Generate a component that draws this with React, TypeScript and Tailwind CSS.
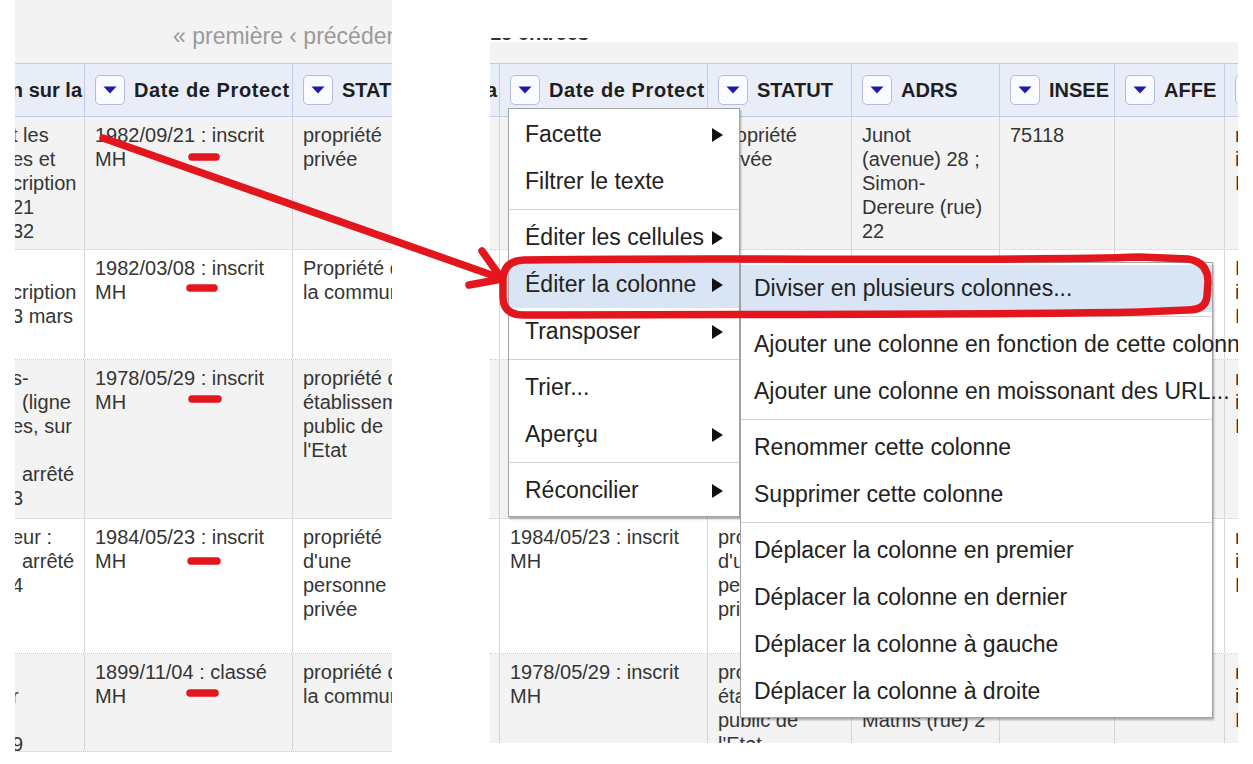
import React from "react";

type Line = React.ReactNode;

function Tri() {
  return (
    <svg width="14" height="8" viewBox="0 0 14 8">
      <path d="M0.5 0.5 H13.5 L7 7.5 Z" fill="#1c1ca6" />
    </svg>
  );
}

function DropBtn() {
  return (
    <div className="w-[30px] h-[30px] shrink-0 rounded-[5px] border border-[#b4bdd9] bg-[#fafbff] flex items-center justify-center">
      <Tri />
    </div>
  );
}

function SubArrow() {
  return (
    <svg width="11" height="14" viewBox="0 0 11 14" className="shrink-0">
      <path d="M0 0 L11 7 L0 14 Z" fill="#111" />
    </svg>
  );
}

function HeadCell({
  cls,
  label,
  btn = true,
  end = false,
  last = false,
  wide = false,
}: {
  cls: string;
  label: string;
  btn?: boolean;
  end?: boolean;
  last?: boolean;
  wide?: boolean;
}) {
  return (
    <div
      className={`${cls} shrink-0 h-full flex items-center overflow-hidden whitespace-nowrap text-[20px] font-bold text-[#1e1e1e] ${
        last ? "" : "border-r border-[#c6cde7]"
      } ${end ? "justify-end pr-[2px]" : "pl-[10px] gap-[9px]"}`}
    >
      {btn && <DropBtn />}
      <span className={wide ? "tracking-[0.6px]" : ""}>{label}</span>
    </div>
  );
}

function BodyCell({
  cls,
  lines,
  last = false,
  edge = false,
  tail = false,
}: {
  cls: string;
  lines: Line[];
  last?: boolean;
  edge?: boolean;
  tail?: boolean;
}) {
  const pad = edge ? "pl-0" : tail ? "pl-[10px] pr-0" : "px-[10px]";
  return (
    <div
      className={`${cls} shrink-0 h-full overflow-hidden pt-[6px] text-[20px] leading-[24px] text-[#353535] whitespace-nowrap ${
        last ? "" : "border-r border-[#d6d6d6]"
      } ${pad}`}
    >
      {lines.map((l, i) => (
        <div key={i} className={`h-[24px] ${edge ? "-ml-[3px]" : ""}`}>
          {l}
        </div>
      ))}
    </div>
  );
}

const ind = (t: string) => <span className="pl-[10px]">{t}</span>;

const rowHeights = ["h-[133px]", "h-[110px]", "h-[159px]", "h-[135px]", "h-[98px]"];
const rowBgs = ["bg-[#f3f3f3]", "bg-white", "bg-[#f3f3f3]", "bg-white", "bg-[#f3f3f3]"];

const leftRows: Line[][][] = [
  [["t les", "es et", "cription", "21", "32"], ["1982/09/21 : inscrit", "MH"], ["propriété", "privée"]],
  [["", "cription", "3 mars"], ["1982/03/08 : inscrit", "MH"], ["Propriété de", "la commune"]],
  [["s-", ind("(ligne"), "es, sur", "", ind("arrêté"), "3"], ["1978/05/29 : inscrit", "MH"], ["propriété d'un", "établissement", "public de", "l'Etat"]],
  [["eur :", ind("arrêté"), "4"], ["1984/05/23 : inscrit", "MH"], ["propriété", "d'une", "personne", "privée"]],
  [["", "r", "", "9"], ["1899/11/04 : classé", "MH"], ["propriété de", "la commune"]],
];

const rightRows: Line[][][] = [
  [[], ["1982/09/21 : inscrit", "MH"], ["propriété", "privée"], ["Junot", "(avenue) 28 ;", "Simon-", "Dereure (rue)", "22"], ["75118"], [], ["remis", "inscrit", "MH"]],
  [[], ["1982/03/08 : inscrit", "MH"], ["Propriété de", "la commune"], ["Lepic (rue) 12"], ["75118"], [], ["Façade", "inscrit", "MH"]],
  [[], ["1978/05/29 : inscrit", "MH"], ["propriété d'un", "établissement", "public de", "l'Etat"], ["Norvins (rue) 3"], ["75118"], [], ["remis", "inscrit", "MH"]],
  [[], ["1984/05/23 : inscrit", "MH"], ["propriété", "d'une", "personne", "privée"], ["Saules (rue des) 4"], ["75118"], [], ["remis", "inscrit", "MH"]],
  [[], ["1978/05/29 : inscrit", "MH"], ["propriété d'un", "établissement", "public de", "l'Etat"], ["Lepic (rue) 54 ;", "Girardon (rue) ;", "Mathis (rue) 2"], ["75118"], [], ["remis", "inscrit", "MH"]],
];

function LeftPanel() {
  const widths = ["w-[70px]", "w-[208px]", "w-[99px]"];
  return (
    <div className="ml-[15px] w-[377px] h-[752px] shrink-0 flex flex-col overflow-hidden">
      <div className="h-[63px] shrink-0 bg-[#f3f3f3] pl-[158px] pt-[23px] text-[23px] leading-[26px] text-[#9a9a9a] whitespace-nowrap overflow-hidden">
        « première ‹ précédente
      </div>
      <div className="h-[54px] shrink-0 flex bg-[#e9edf8] border-y border-[#c6cde7]">
        <HeadCell cls="w-[70px]" label="Protection sur la" btn={false} end />
        <HeadCell cls="w-[208px]" label="Date de Protect" wide />
        <HeadCell cls="w-[99px]" label="STATUT" last />
      </div>
      {leftRows.map((cells, r) => (
        <div key={r} className={`shrink-0 flex border-b border-dotted border-[#cdcdcd] ${rowHeights[r]} ${rowBgs[r]}`}>
          {cells.map((lines, c) => (
            <BodyCell key={c} cls={widths[c]} lines={lines} edge={c === 0} last={c === 2} />
          ))}
        </div>
      ))}
    </div>
  );
}

function MI({ label, arrow = false, hl = false, sub = false }: { label: string; arrow?: boolean; hl?: boolean; sub?: boolean }) {
  return (
    <div
      className={`h-[47px] flex items-center justify-between whitespace-nowrap text-[23px] text-[#222] ${
        sub ? "pl-[13px] pr-[10px]" : "pl-[16px] pr-[16px]"
      } ${hl ? "bg-[#d9e4f5]" : ""}`}
    >
      <span>{label}</span>
      {arrow && <SubArrow />}
    </div>
  );
}

function Sep() {
  return (
    <div className="h-[9px] flex items-center">
      <div className="h-px w-full bg-[#d2d2d2]" />
    </div>
  );
}

function Menu() {
  return (
    <div className="absolute left-[18px] top-[70px] w-[232px] bg-white border border-[#a3a3a3] shadow-[1px_2px_2px_rgba(0,0,0,0.3)] py-[2px]">
      <MI label="Facette" arrow />
      <MI label="Filtrer le texte" />
      <Sep />
      <MI label="Éditer les cellules" arrow />
      <MI label="Éditer la colonne" arrow hl />
      <MI label="Transposer" arrow />
      <Sep />
      <MI label="Trier..." />
      <MI label="Aperçu" arrow />
      <Sep />
      <MI label="Réconcilier" arrow />
    </div>
  );
}

function SubMenu() {
  return (
    <div className="absolute left-[250px] top-[224px] w-[473px] bg-white border border-[#a3a3a3] shadow-[1px_2px_2px_rgba(0,0,0,0.3)] py-[2px]">
      <MI sub hl label="Diviser en plusieurs colonnes..." />
      <Sep />
      <MI sub label="Ajouter une colonne en fonction de cette colonne..." />
      <MI sub label="Ajouter une colonne en moissonant des URL..." />
      <Sep />
      <MI sub label="Renommer cette colonne" />
      <MI sub label="Supprimer cette colonne" />
      <Sep />
      <MI sub label="Déplacer la colonne en premier" />
      <MI sub label="Déplacer la colonne en dernier" />
      <MI sub label="Déplacer la colonne à gauche" />
      <MI sub label="Déplacer la colonne à droite" />
    </div>
  );
}

function RightPanel() {
  const widths = ["w-[10px]", "w-[208px]", "w-[144px]", "w-[148px]", "w-[115px]", "w-[110px]", "w-[13px]"];
  return (
    <div className="relative ml-[98px] mt-[38px] w-[748px] h-[705px] shrink-0 overflow-hidden">
      <div className="h-[25px] flex flex-col overflow-hidden">
        <div className="h-[4px] shrink-0" />
        <div className="h-[21px] shrink-0 bg-[#f3f3f3]">
          <div className="-mt-[21px] text-[20px] leading-[24px] font-bold text-[#333] whitespace-nowrap">15 entrées</div>
        </div>
      </div>
      <div className="h-[54px] flex bg-[#e9edf8] border-y border-[#c6cde7]">
        <HeadCell cls="w-[10px]" label="sur la" btn={false} end />
        <HeadCell cls="w-[208px]" label="Date de Protect" wide />
        <HeadCell cls="w-[144px]" label="STATUT" />
        <HeadCell cls="w-[148px]" label="ADRS" />
        <HeadCell cls="w-[115px]" label="INSEE" />
        <HeadCell cls="w-[110px]" label="AFFE" />
        <HeadCell cls="w-[13px]" label="" last />
      </div>
      {rightRows.map((cells, r) => (
        <div key={r} className={`flex border-b border-dotted border-[#cdcdcd] ${rowHeights[r]} ${rowBgs[r]}`}>
          {cells.map((lines, c) => (
            <BodyCell key={c} cls={widths[c]} lines={lines} edge={c === 0} tail={c === 6} last={c === 6} />
          ))}
        </div>
      ))}
      <Menu />
      <SubMenu />
    </div>
  );
}

function Annotations() {
  const dashes: [number, number, number][] = [
    [192, 216, 157],
    [190, 214, 288],
    [192, 218, 399],
    [191, 217, 561],
    [190, 215, 693],
  ];
  return (
    <svg className="absolute inset-0 pointer-events-none" width="1253" height="764" viewBox="0 0 1253 764">
      <g stroke="#e3151d" strokeWidth="7.5" strokeLinecap="round" strokeLinejoin="round" fill="none">
        <path d="M103 138 L500 278" />
        <path d="M482 251 L502 279 L469 285" />
        <path d="M524 260 C 700 257, 1000 262, 1140 257 L 1188 259 Q 1208 262 1208 282 L 1207 296 Q 1206 310 1188 310 L 1140 312 C 1000 315, 700 314, 524 315 Q 503 315 503 297 L 503 280 Q 503 261 524 260 Z" />
        {dashes.map(([x1, x2, y], i) => (
          <path key={i} d={`M${x1} ${y} L${x2} ${y}`} />
        ))}
      </g>
    </svg>
  );
}

export default function App() {
  return (
    <div className="relative w-[1253px] h-[764px] bg-white overflow-hidden font-['Liberation_Sans',Arial,sans-serif]">
      <div className="flex items-start">
        <LeftPanel />
        <RightPanel />
      </div>
      <Annotations />
    </div>
  );
}
